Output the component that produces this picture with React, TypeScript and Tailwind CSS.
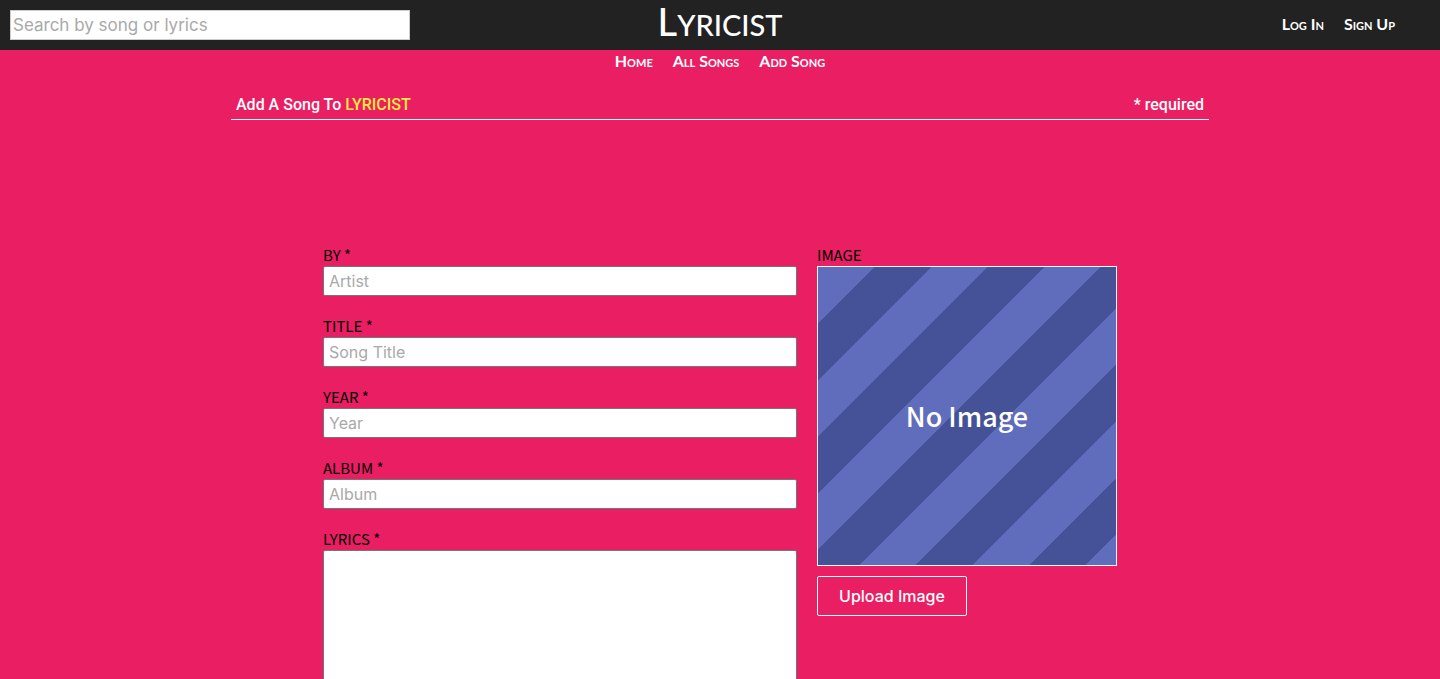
const NAV_LINKS = ["Home", "All Songs", "Add Song"];
const ACCOUNT_LINKS = ["Log In", "Sign Up"];

const FIELDS = [
  { id: "artist", label: "BY", placeholder: "Artist" },
  { id: "title", label: "TITLE", placeholder: "Song Title" },
  { id: "year", label: "YEAR", placeholder: "Year" },
  { id: "album", label: "ALBUM", placeholder: "Album" },
];

const SMALL_CAPS = "[font-variant-caps:small-caps] font-['Lato',sans-serif]";
const LABEL =
  "pb-0.5 text-[15px] leading-[18px] text-black font-['Noto_Sans_CJK_SC',sans-serif]";
const CONTROL =
  "w-full rounded-xs border border-[#767676] bg-white px-[5px] text-base text-black outline-none placeholder:text-[#a9a9a9]";

function TopBar() {
  return (
    <header className="grid h-[50px] grid-cols-[1fr_auto_1fr] items-center bg-[#222] pl-2.5 pr-[45px] text-white">
      <input
        type="search"
        aria-label="Search by song or lyrics"
        placeholder="Search by song or lyrics"
        className="h-[30px] w-full max-w-[400px] border border-[#ccc] bg-white px-0.5 text-[17px] text-black outline-none placeholder:text-[#a9a9a9]"
      />
      <a
        href="#"
        className="-mr-[35px] inline-block pb-1 text-[29px] leading-[42px] font-medium uppercase font-['Lato',sans-serif] first-letter:text-[38px]"
      >
        Lyricist
      </a>
      <nav className={`${SMALL_CAPS} flex justify-end gap-5 pb-0.5 text-base font-bold`}>
        {ACCOUNT_LINKS.map((name) => (
          <a key={name} href="#">
            {name}
          </a>
        ))}
      </nav>
    </header>
  );
}

function ImagePicker() {
  return (
    <section className="flex w-[300px] shrink-0 flex-col">
      <h2 className={LABEL}>IMAGE</h2>
      <div className="flex aspect-square items-center justify-center border border-white bg-[repeating-linear-gradient(135deg,#606dbc_0px,#606dbc_40px,#465298_40px,#465298_80px)]">
        <span className="text-[27px] font-medium text-white font-['Noto_Sans_CJK_SC',sans-serif]">
          No Image
        </span>
      </div>
      <button
        type="button"
        className="mt-2.5 h-10 w-[150px] rounded-xs border border-white text-base font-medium text-white"
      >
        Upload Image
      </button>
    </section>
  );
}

export default function App() {
  return (
    <div className="min-h-screen bg-[#e91e63] font-['Inter',sans-serif]">
      <TopBar />
      <nav
        className={`${SMALL_CAPS} flex h-6 items-center justify-center gap-5 pb-0.5 text-base font-bold text-white`}
      >
        {NAV_LINKS.map((name) => (
          <a key={name} href="#">
            {name}
          </a>
        ))}
      </nav>
      <main className="mx-auto mt-4 max-w-[978px]">
        <div className="flex h-[30px] items-center justify-between border-b border-white px-[5px] text-base font-medium text-white font-['Roboto',sans-serif]">
          <h1>
            Add A Song To <span className="text-[#ffeb3b]">LYRICIST</span>
          </h1>
          <p>* required</p>
        </div>
        <form className="mx-auto mt-[126px] flex max-w-[794px] items-start gap-5">
          <div className="flex min-w-0 flex-1 flex-col gap-[21px]">
            {FIELDS.map((field) => (
              <div key={field.id} className="flex flex-col">
                <label htmlFor={field.id} className={LABEL}>
                  {field.label} *
                </label>
                <input
                  id={field.id}
                  type="text"
                  required
                  placeholder={field.placeholder}
                  className={`${CONTROL} h-[30px]`}
                />
              </div>
            ))}
            <div className="flex flex-col">
              <label htmlFor="lyrics" className={LABEL}>
                LYRICS *
              </label>
              <textarea id="lyrics" required rows={12} className={`${CONTROL} resize-none`} />
            </div>
          </div>
          <ImagePicker />
        </form>
      </main>
    </div>
  );
}
